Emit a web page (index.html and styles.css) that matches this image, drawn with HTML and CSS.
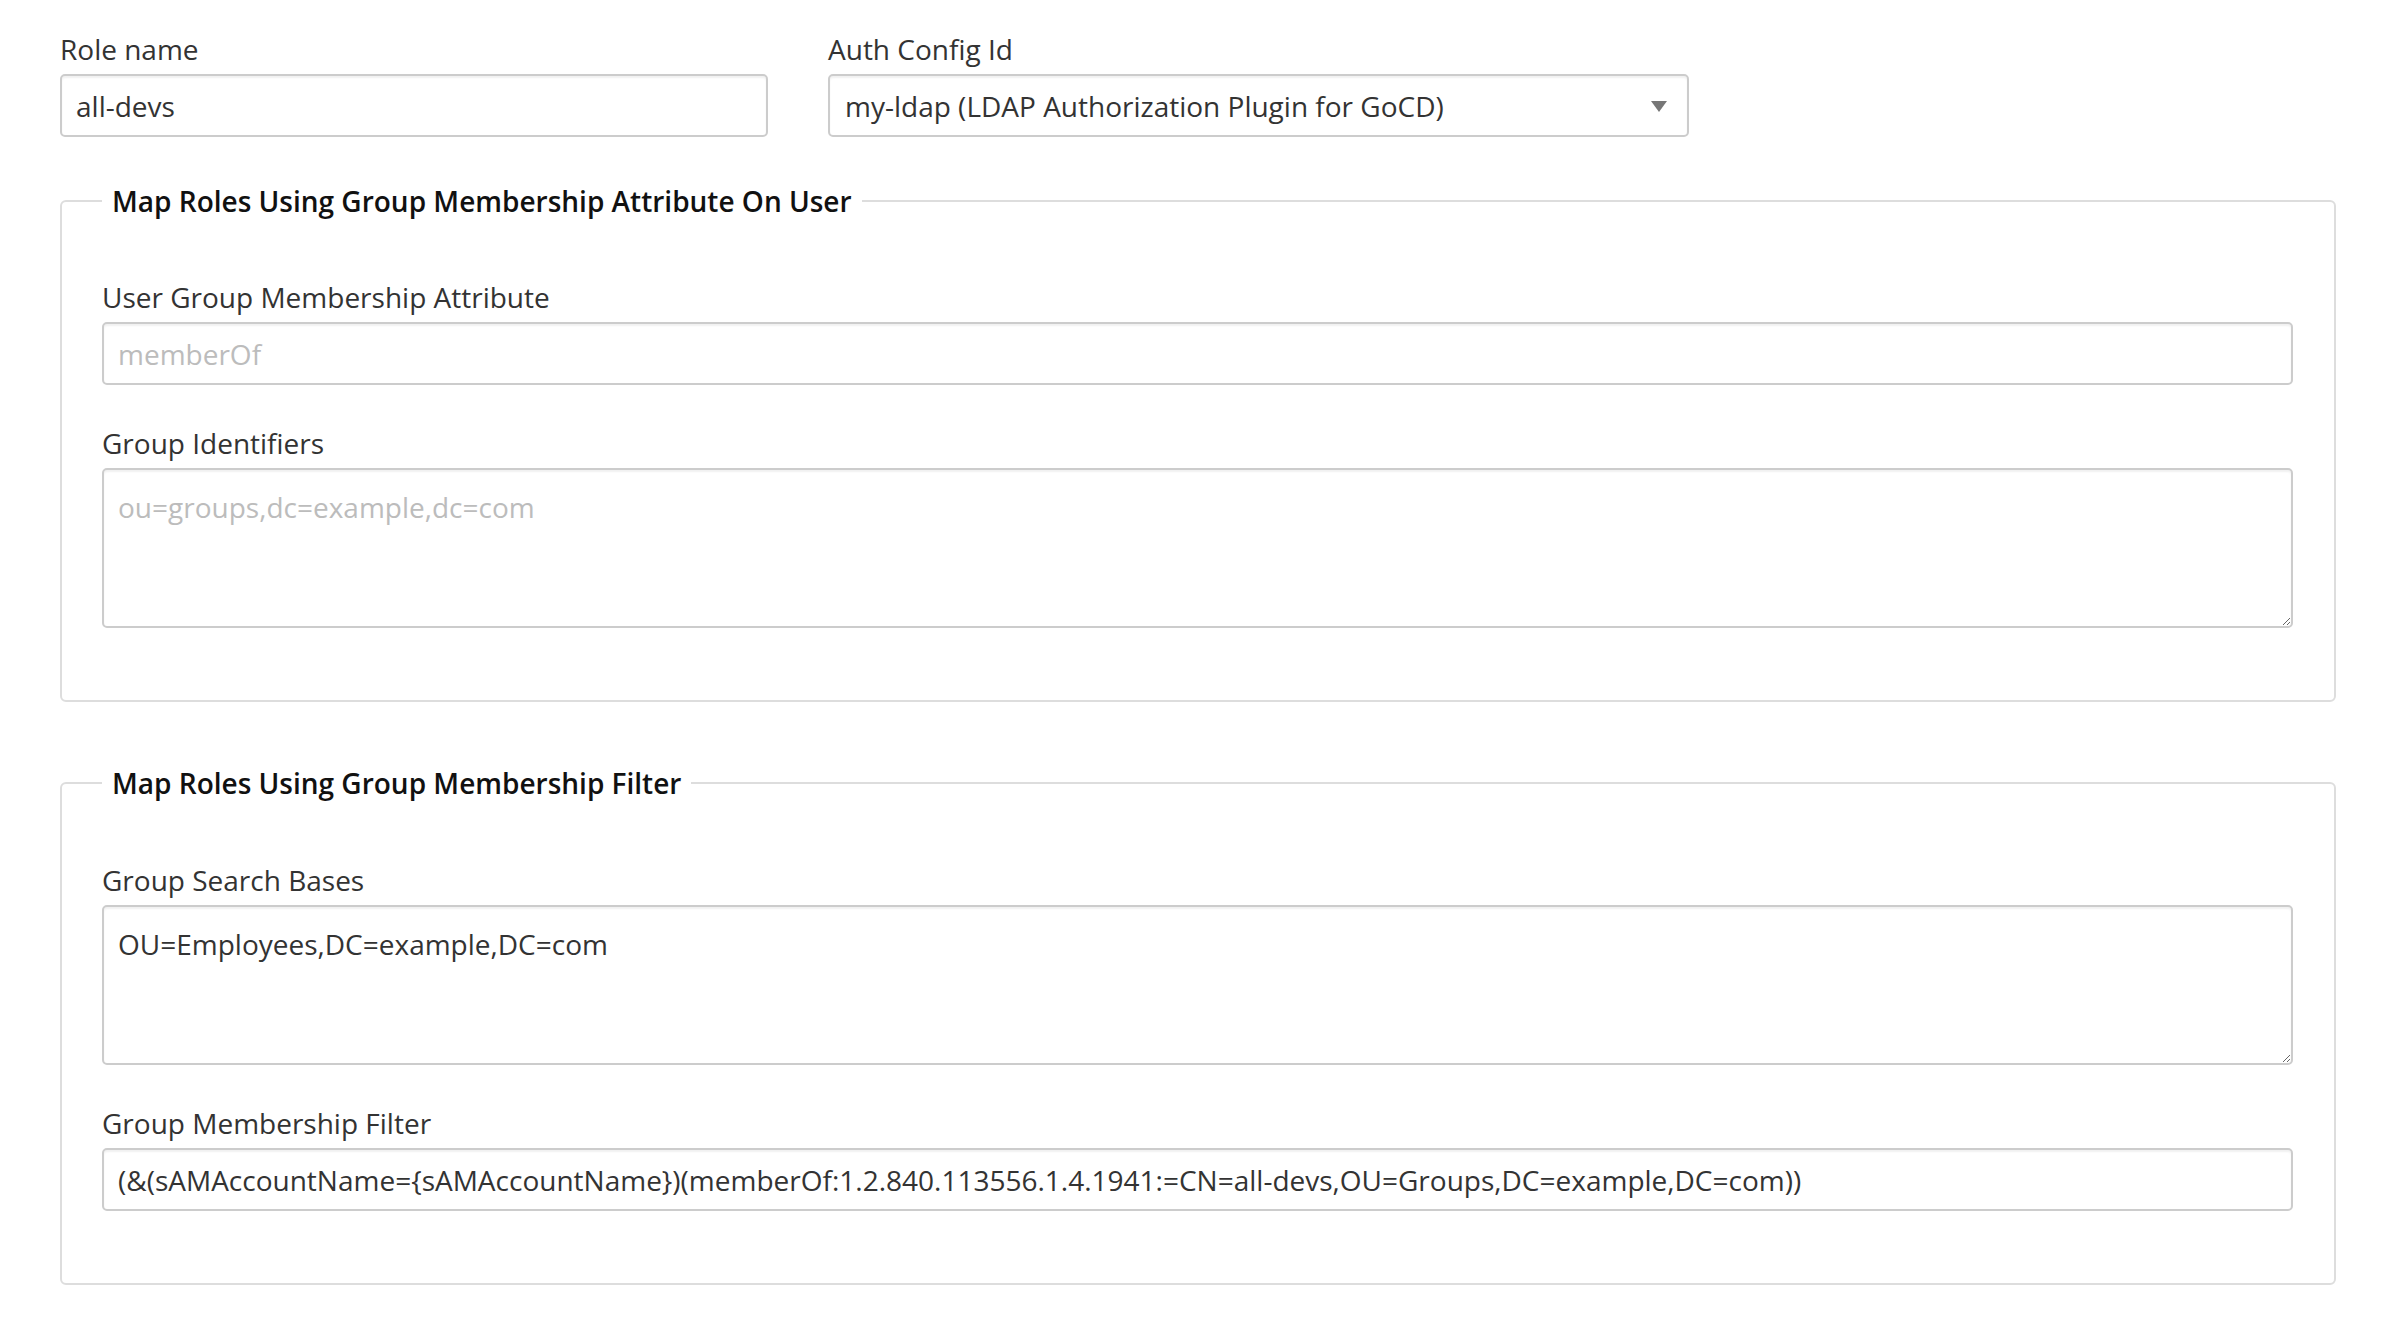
FILE: index.html
```html
<!DOCTYPE html>
<html lang="en">
<head>
<meta charset="utf-8">
<title>Role</title>
<link rel="stylesheet" href="styles.css">
</head>
<body>
<div class="page">
  <div class="top-row">
    <div class="field role-field">
      <label class="label" for="role-name">Role name</label>
      <input id="role-name" class="input" type="text" value="all-devs">
    </div>
    <div class="field auth-field">
      <label class="label" for="auth-config">Auth Config Id</label>
      <div class="select-wrap">
        <select id="auth-config" class="select">
          <option>my-ldap (LDAP Authorization Plugin for GoCD)</option>
        </select>
        <svg class="select-arrow" width="16" height="11" viewBox="0 0 16 11"><path d="M0 0 H16 L8 11 Z" fill="#777"/></svg>
      </div>
    </div>
  </div>

  <fieldset class="group first">
    <legend class="legend">Map Roles Using Group Membership Attribute On User</legend>
    <div class="field">
      <label class="label">User Group Membership Attribute</label>
      <input class="input" type="text" placeholder="memberOf">
    </div>
    <div class="field last">
      <label class="label">Group Identifiers</label>
      <textarea class="textarea" placeholder="ou=groups,dc=example,dc=com"></textarea>
    </div>
  </fieldset>

  <fieldset class="group second">
    <legend class="legend">Map Roles Using Group Membership Filter</legend>
    <div class="field">
      <label class="label">Group Search Bases</label>
      <textarea class="textarea">OU=Employees,DC=example,DC=com</textarea>
    </div>
    <div class="field last">
      <label class="label">Group Membership Filter</label>
      <input class="input" type="text" value="(&amp;(sAMAccountName={sAMAccountName})(memberOf:1.2.840.113556.1.4.1941:=CN=all-devs,OU=Groups,DC=example,DC=com))">
    </div>
  </fieldset>
</div>
</body>
</html>
```

FILE: styles.css
```css
html, body {
  margin: 0;
  padding: 0;
  background: #ffffff;
}

body {
  font-family: "Open Sans", "Noto Sans", sans-serif;
  font-size: 28px;
  line-height: 38px;
  color: #333333;
}

.page {
  padding: 30px 58px 40px 60px;
}

.top-row {
  display: flex;
  gap: 60px;
}

.role-field {
  width: 708px;
}

.auth-field {
  width: 861px;
}

.field {
  display: flex;
  flex-direction: column;
  margin-bottom: 39px;
}

.top-row .field {
  margin-bottom: 0;
}

.field.last {
  margin-bottom: 0;
}

.label {
  display: block;
  margin-bottom: 6px;
  color: #333333;
}

.input,
.select,
.textarea {
  box-sizing: border-box;
  width: 100%;
  font-family: inherit;
  font-size: 28px;
  line-height: 38px;
  color: #333333;
  background: #ffffff;
  border: 2px solid #cccccc;
  border-radius: 5px;
  box-shadow: inset 0 2px 2px rgba(0, 0, 0, 0.06);
  margin: 0;
  outline: none;
}

.input {
  height: 63px;
  padding: 1px 14px 0 14px;
}

.input::placeholder,
.textarea::placeholder {
  color: #bcbcbc;
  opacity: 1;
}

.select-wrap {
  position: relative;
}

.select {
  height: 63px;
  padding: 1px 50px 0 15px;
  appearance: none;
  -webkit-appearance: none;
}

.select-arrow {
  position: absolute;
  right: 22px;
  top: 27px;
  pointer-events: none;
}

.textarea {
  height: 160px;
  padding: 18px 14px 14px 14px;
  resize: vertical;
  display: block;
}

.group {
  margin: 45px 0 0 0;
  padding: 58px 41px 72px 40px;
  border: 2px solid #dddddd;
  border-radius: 6px;
  min-width: 0;
}

.group.second {
  margin-top: 62px;
  padding-top: 59px;
  padding-bottom: 72px;
}

.legend {
  padding: 0 10px;
  font-weight: 600;
  color: #111111;
  line-height: 38px;
}
```
